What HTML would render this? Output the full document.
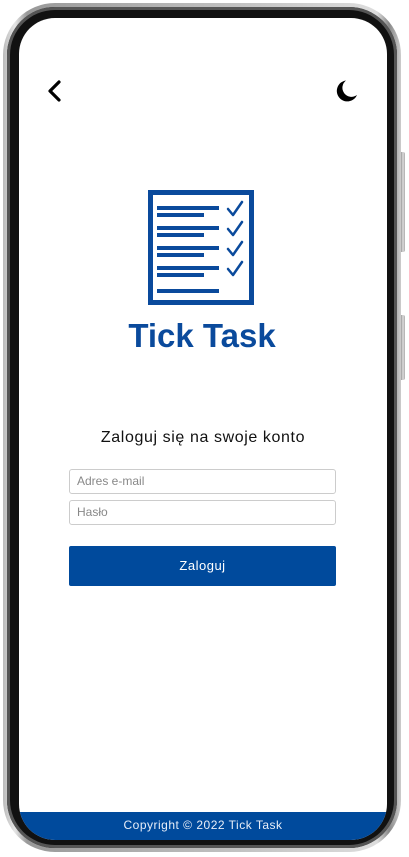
<!DOCTYPE html>
<html><head><meta charset="utf-8"><style>
html,body{margin:0;padding:0;width:409px;height:857px;background:#fff;overflow:hidden;font-family:"Liberation Sans","DejaVu Sans",sans-serif}
.outer{position:absolute;left:3px;top:3px;width:398px;height:849px;border-radius:52px;background:linear-gradient(90deg,#bbb,#e6e6e6 3%,#999 6%,#ddd 94%,#888 97%,#ccc);}
.bezel{position:absolute;left:7px;top:7px;width:390px;height:841px;border-radius:48px;background:#111;box-shadow:inset 0 0 0 3px #555;}
.screen{position:absolute;left:19px;top:18px;width:368px;height:822px;border-radius:36px;background:#fff;overflow:hidden}
.btn-side{position:absolute;left:401px;width:4px;background:linear-gradient(90deg,#999,#ddd,#aaa);border-radius:0 2px 2px 0}
.footer{position:absolute;left:0;bottom:0;width:100%;height:28px;background:#004a9c;color:#e8eef8;font-size:12px;text-align:center;line-height:26px;letter-spacing:.5px}
h1{position:absolute;left:0;width:100%;top:411px;margin:0;text-align:center;font-weight:normal;font-size:16px;letter-spacing:.6px;color:#111}
.inp{position:absolute;left:50px;width:258px;height:23px;border:1px solid #ccc;border-radius:3px;font-size:12px;color:#888;line-height:23px;padding-left:7px}
.go{position:absolute;left:50px;top:528px;width:267px;height:40px;background:#004a9c;border-radius:2px;color:#fff;text-align:center;line-height:40px;font-size:13px;letter-spacing:.5px}
</style></head><body>
<div class="outer"></div>
<div class="bezel"></div>
<div class="btn-side" style="top:152px;height:100px"></div>
<div class="btn-side" style="top:315px;height:65px"></div>
<div class="screen">
<svg style="position:absolute;left:27px;top:62px" width="20" height="22" viewBox="0 0 20 22"><path d="M13 2 L4 11 L13 20" fill="none" stroke="#000" stroke-width="3.2" stroke-linecap="round" stroke-linejoin="round"/></svg>
<svg style="position:absolute;left:315px;top:61px" width="24" height="24" viewBox="0 0 24 24"><path d="M12 1.5 A10.5 10.5 0 1 0 23 16 A8 8 0 0 1 12 1.5 Z" fill="#000"/></svg>
<svg style="position:absolute;left:105px;top:172px" width="160" height="160" viewBox="0 0 160 160">
<rect x="26.5" y="2.5" width="101" height="110" fill="none" stroke="#0a4a9c" stroke-width="5"/>
<g fill="#0a4a9c">
<rect x="33" y="16" width="62" height="4"/><rect x="33" y="23" width="47" height="4"/>
<rect x="33" y="36" width="62" height="4"/><rect x="33" y="43" width="47" height="4"/>
<rect x="33" y="56" width="62" height="4"/><rect x="33" y="63" width="47" height="4"/>
<rect x="33" y="76" width="62" height="4"/><rect x="33" y="83" width="47" height="4"/>
<rect x="33" y="99" width="62" height="4"/>
</g>
<g fill="none" stroke="#0a4a9c" stroke-width="2.5" stroke-linecap="round" stroke-linejoin="round">
<path d="M104 19 l5 6 l9 -13"/><path d="M104 39 l5 6 l9 -13"/><path d="M104 59 l5 6 l9 -13"/><path d="M104 79 l5 6 l9 -13"/>
</g>
<text x="78" y="157" text-anchor="middle" font-family="Liberation Sans,sans-serif" font-weight="bold" font-size="33" fill="#0a4a9c">Tick Task</text>
</svg>
<h1>Zaloguj się na swoje konto</h1>
<div class="inp" style="top:451px">Adres e-mail</div>
<div class="inp" style="top:482px">Hasło</div>
<div class="go">Zaloguj</div>
<div class="footer">Copyright © 2022 Tick Task</div>
</div>
</body></html>
